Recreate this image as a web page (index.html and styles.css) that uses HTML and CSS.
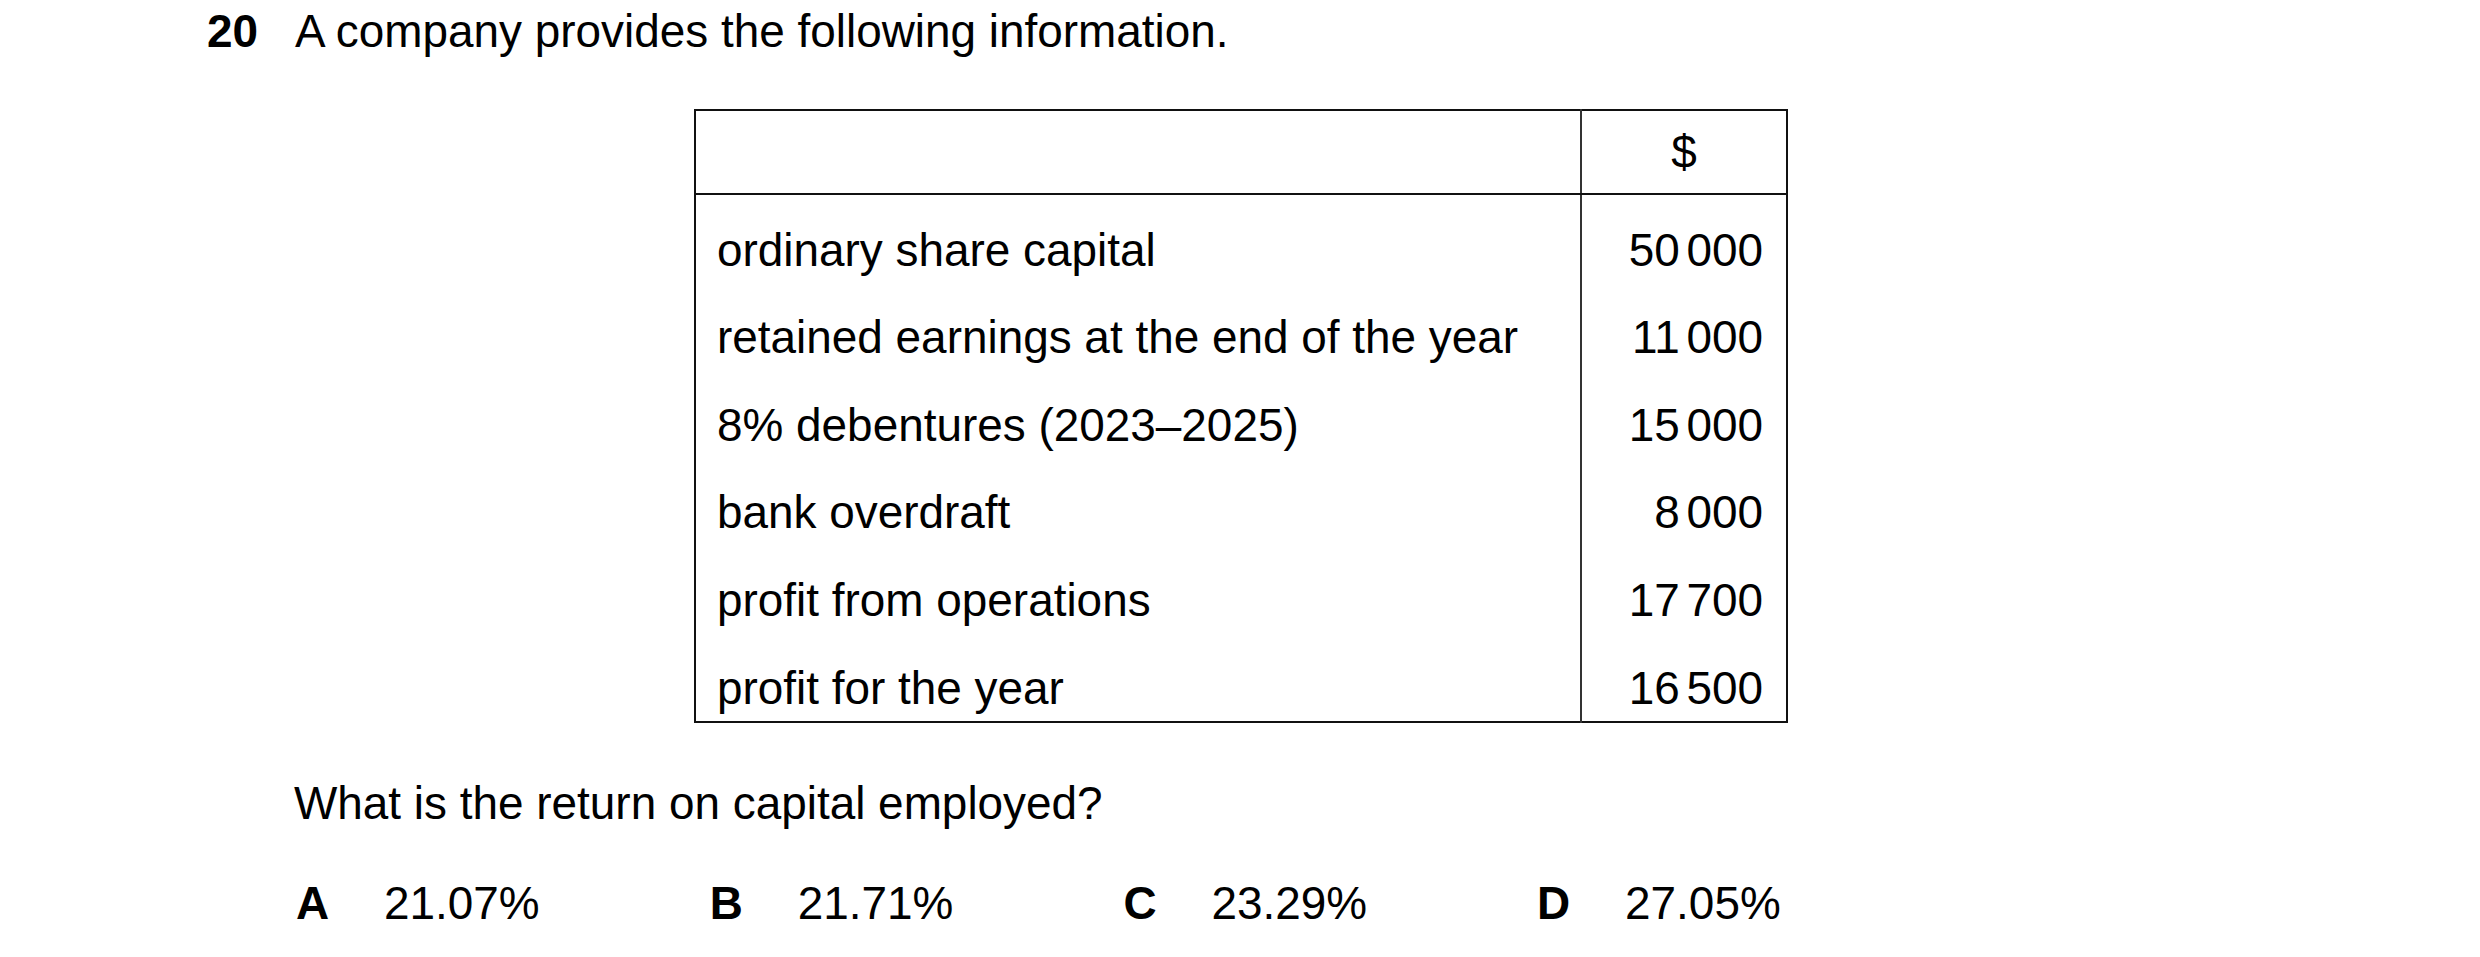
FILE: index.html
```html
<!DOCTYPE html>
<html lang="en">
<head>
<meta charset="utf-8">
<title>Question 20</title>
<link rel="stylesheet" href="styles.css">
</head>
<body>
<div class="question">
  <div class="stem">
    <span class="qnum">20</span>
    <span class="qtext">A company provides the following information.</span>
  </div>
  <div class="body">
    <table class="info">
      <colgroup><col class="c-label"><col class="c-value"></colgroup>
      <thead>
        <tr><th></th><th class="cur">$</th></tr>
      </thead>
      <tbody>
        <tr><td>ordinary share capital</td><td class="num">50 000</td></tr>
        <tr><td>retained earnings at the end of the year</td><td class="num">11 000</td></tr>
        <tr><td>8% debentures (2023–2025)</td><td class="num">15 000</td></tr>
        <tr><td>bank overdraft</td><td class="num">8 000</td></tr>
        <tr><td>profit from operations</td><td class="num">17 700</td></tr>
        <tr><td>profit for the year</td><td class="num">16 500</td></tr>
      </tbody>
    </table>
    <p class="ask">What is the return on capital employed?</p>
    <div class="options">
      <div class="opt"><span class="key">A</span><span class="val">21.07%</span></div>
      <div class="opt"><span class="key">B</span><span class="val">21.71%</span></div>
      <div class="opt"><span class="key">C</span><span class="val">23.29%</span></div>
      <div class="opt"><span class="key">D</span><span class="val">27.05%</span></div>
    </div>
  </div>
</div>
</body>
</html>
```

FILE: styles.css
```css
html, body {
  margin: 0;
  padding: 0;
  background: #ffffff;
}

body {
  font-family: "Liberation Sans", Arial, sans-serif;
  font-size: 45.9px;
  line-height: 52px;
  color: #000000;
}

.question {
  padding: 5px 0 0 207px;
}

.stem {
  display: flex;
}

.qnum {
  width: 88px;
  font-weight: bold;
}

.body {
  padding-left: 87px;
}

.info {
  margin: 52px 0 0 400px;
  width: 1092px;
  border-collapse: collapse;
  border: 2px solid #111111;
  table-layout: fixed;
}

.c-label {
  width: 886px;
}

.c-value {
  width: 206px;
}

.info th {
  height: 82px;
  padding: 0;
  font-weight: normal;
  border-bottom: 2px solid #111111;
  vertical-align: middle;
}

.info th + th,
.info td + td {
  border-left: 2px solid #333333;
}

.info th.cur {
  text-align: center;
}

.info td {
  padding: 28.6px 21px 7px 21px;
  vertical-align: top;
}

.info td.num {
  text-align: right;
  padding-right: 23px;
  word-spacing: -6px;
}

.ask {
  margin: 54px 0 0 0;
}

.options {
  display: grid;
  grid-template-columns: repeat(4, 413.7px);
  margin-top: 48px;
}

.opt {
  display: flex;
}

.key {
  width: 88px;
  font-weight: bold;
  padding-left: 2px;
}
```
